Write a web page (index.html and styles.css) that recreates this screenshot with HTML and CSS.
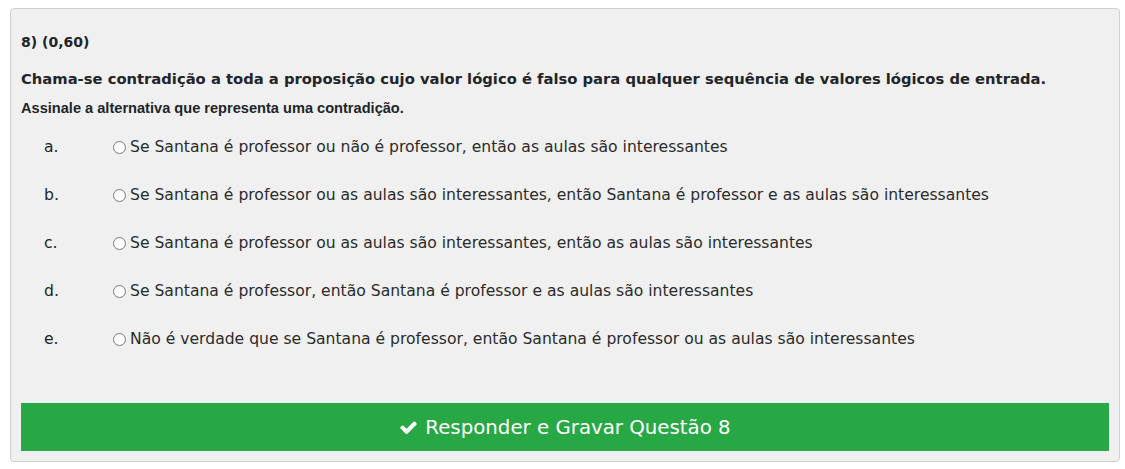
FILE: index.html
```html
<!DOCTYPE html>
<html lang="pt">
<head>
<meta charset="utf-8">
<link rel="stylesheet" href="styles.css">
</head>
<body>
<div class="card">
  <div class="qnum">8) (0,60)</div>
  <div class="qtext">Chama-se contradição a toda a proposição cujo valor lógico é falso para qualquer sequência de valores lógicos de entrada.</div>
  <div class="qhint">Assinale a alternativa que representa uma contradição.</div>
  <div class="options">
    <label class="opt"><span class="letter">a.</span><input type="radio" name="q8" class="radio"><span class="otext">Se Santana é professor ou não é professor, então as aulas são interessantes</span></label>
    <label class="opt"><span class="letter">b.</span><input type="radio" name="q8" class="radio"><span class="otext">Se Santana é professor ou as aulas são interessantes, então Santana é professor e as aulas são interessantes</span></label>
    <label class="opt"><span class="letter">c.</span><input type="radio" name="q8" class="radio"><span class="otext">Se Santana é professor ou as aulas são interessantes, então as aulas são interessantes</span></label>
    <label class="opt"><span class="letter">d.</span><input type="radio" name="q8" class="radio"><span class="otext">Se Santana é professor, então Santana é professor e as aulas são interessantes</span></label>
    <label class="opt"><span class="letter">e.</span><input type="radio" name="q8" class="radio"><span class="otext">Não é verdade que se Santana é professor, então Santana é professor ou as aulas são interessantes</span></label>
  </div>
  <button class="btn"><svg class="check" viewBox="0 0 1792 1792" width="19" height="19"><path fill="#fff" d="M1671 566q0 40-28 68l-724 724-136 136q-28 28-68 28t-68-28l-136-136-362-362q-28-28-28-68t28-68l136-136q28-28 68-28t68 28l294 295 656-657q28-28 68-28t68 28l136 136q28 28 28 68z"/></svg><span>Responder e Gravar Questão 8</span></button>
</div>
</body>
</html>
```
FILE: styles.css
```css
html, body {
  margin: 0;
  padding: 0;
  background: #ffffff;
}
body {
  padding: 8px 5px 0 10px;
  font-family: "DejaVu Sans", "Noto Sans", sans-serif;
  color: #212529;
}
.card {
  background: #f0f0f0;
  border: 1px solid #d0d0d0;
  border-radius: 4px;
  padding: 10px 10px 10px 10px;
  height: 454px;
  box-sizing: border-box;
  display: flex;
  flex-direction: column;
}
.qnum {
  margin-top: 13px;
  font-weight: bold;
  font-size: 14px;
  line-height: 20px;
}
.qtext {
  margin-top: 17px;
  font-weight: bold;
  font-size: 14.75px;
  line-height: 20px;
}
.qhint {
  margin-top: 10px;
  font-family: "Liberation Sans", Arial, sans-serif;
  font-weight: bold;
  font-size: 14.6px;
  line-height: 18px;
}
.options {
  margin-top: 6px;
  display: flex;
  flex-direction: column;
}
.opt {
  display: flex;
  align-items: center;
  height: 48px;
  font-size: 15.6px;
}
.letter {
  width: 92px;
  padding-left: 23px;
  box-sizing: border-box;
  flex: none;
}
.radio {
  margin: 0 4px 0 0;
  width: 13px;
  height: 13px;
  flex: none;
}
.otext {
  white-space: nowrap;
  color: #2b2b2b;
}
.btn {
  margin-top: 40px;
  height: 48px;
  width: 100%;
  border: none;
  border-radius: 0;
  background: #28a745;
  color: #ffffff;
  font-family: "DejaVu Sans", "Noto Sans", sans-serif;
  font-size: 19.8px;
  display: flex;
  align-items: center;
  justify-content: center;
  gap: 7px;
  padding: 0;
}
.check {
  flex: none;
}
```
